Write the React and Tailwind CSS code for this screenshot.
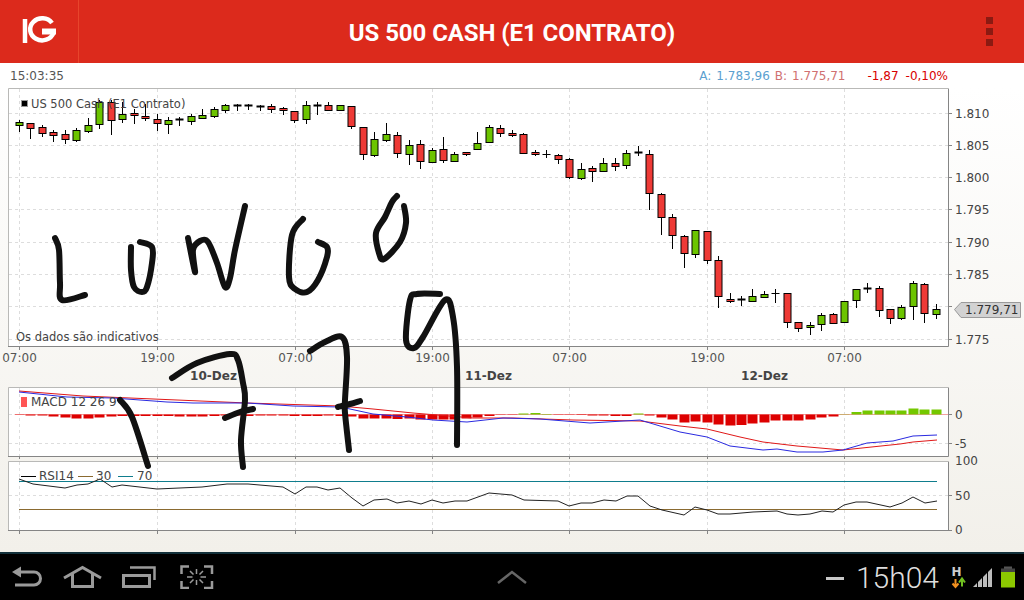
import React from "react";

/* [wickTop, bodyTop, bodyBottom, wickBottom, color] in page pixels */
const CANDLES = [
  [120,122,125,132,"g"],[123,123,128,139,"r"],[125,127,133,137,"r"],[130,132,135,142,"r"],[130,134,139,144,"r"],
  [128,130,140,142,"g"],[118,125,131,133,"g"],[100,102,124,129,"g"],[100,102,120,135,"r"],[102,114,119,123,"g"],
  [109,113,115,124,"r"],[104,116,118,121,"r"],[114,119,123,131,"r"],[117,120,124,134,"g"],[117,119,120,126,"k"],
  [114,116,121,125,"g"],[109,115,118,119,"g"],[107,109,116,118,"g"],[104,105,110,113,"g"],[104,105,106,111,"k"],
  [104,105,106,110,"k"],[105,106,107,111,"k"],[104,106,109,113,"r"],[107,108,110,115,"r"],[111,111,120,123,"r"],
  [101,105,119,124,"g"],[102,105,106,115,"k"],[102,105,110,111,"r"],[105,105,110,110,"g"],[106,106,126,129,"r"],
  [127,127,154,160,"r"],[132,139,155,157,"g"],[123,134,140,142,"g"],[132,135,153,158,"r"],[140,145,154,165,"g"],
  [140,144,161,169,"r"],[148,150,162,163,"g"],[137,149,160,163,"r"],[152,154,161,161,"g"],[152,152,154,156,"r"],
  [132,143,149,150,"g"],[125,127,142,143,"g"],[125,128,133,137,"r"],[130,133,135,137,"r"],[133,134,153,153,"r"],
  [150,152,154,156,"r"],[150,154,154,158,"k"],[154,155,159,164,"r"],[158,159,177,179,"r"],[163,169,178,180,"g"],
  [166,168,171,182,"r"],[158,163,171,172,"g"],[158,163,166,171,"r"],[150,153,165,169,"g"],[146,152,153,156,"k"],
  [150,154,193,210,"r"],[193,194,217,235,"r"],[214,217,235,249,"r"],[235,236,253,268,"r"],[230,230,254,258,"g"],
  [231,231,260,264,"r"],[256,260,296,308,"r"],[293,299,301,303,"r"],[296,299,300,306,"k"],[289,296,301,301,"g"],
  [291,294,297,297,"g"],[289,293,293,303,"k"],[293,293,322,328,"r"],[322,322,328,332,"r"],[322,325,327,335,"g"],
  [313,315,324,331,"g"],[313,314,323,323,"r"],[301,301,322,323,"g"],[289,289,300,308,"g"],[283,288,289,293,"k"],
  [286,288,310,317,"r"],[309,309,318,324,"r"],[305,307,318,320,"g"],[281,283,306,320,"g"],[283,284,313,323,"r"],
  [304,309,314,319,"g"],
];

/* MACD histogram: px from the zero line, positive goes up */
const HIST = [
  -0.3,-1,-1,-2,-3,-4,-4,-3,-2,-1.5,-1.5,-1.5,-1.5,-1.5,-2,-2,-2,-1.5,-1,-1,-1.5,-1,-1,-1,-1.5,-1.5,-1.5,-1,-1.5,-2,
  -4,-4,-4,-4.5,-4,-5,-5,-5,-5,-4,-3,-1.5,-0.3,-0.3,1,1.5,0.5,-0.3,-0.3,-0.5,-1,-1,-1.5,-1.5,1,-1,-3,-5,
  -8,-7,-8,-10,-11,-10.5,-9,-8,-6,-6,-6,-5,-3,-2,0.3,2.5,4,4,4,4,6,5,5,
];

const MACD_RED = [[19,391],[83,396],[177,400],[247,403],[340,406],[373,409],[413,413],[473,418],[513,418],[573,420],[640,421],[680,426],[707,429],[740,437],[763,442],[780,444],[797,446],[843,450],[900,444],[913,442],[937,440]];
const MACD_BLUE = [[19,392],[67,397],[113,398],[167,402],[193,403],[247,403],[293,406],[340,407],[350,409],[373,414],[407,417],[433,420],[467,422],[503,418],[540,419],[590,423],[640,420],[680,432],[707,437],[730,446],[763,450],[777,449],[797,452],[823,452],[843,450],[867,443],[893,441],[913,436],[937,435]];
const RSI = [[19,479],[33,484],[65,488],[77,485],[88,484],[100,479],[112,487],[122,485],[157,489],[202,487],[227,484],[248,484],[283,487],[295,494],[306,487],[317,487],[328,490],[340,488],[352,498],[363,506],[374,500],[387,499],[397,503],[409,501],[421,504],[432,500],[443,503],[455,501],[467,501],[489,493],[512,495],[524,500],[558,501],[569,506],[581,503],[592,503],[604,500],[616,501],[627,496],[638,496],[650,506],[662,510],[684,515],[695,507],[707,510],[718,514],[730,514],[753,512],[777,511],[787,514],[798,515],[810,514],[822,511],[833,512],[844,505],[856,502],[867,502],[890,507],[902,503],[913,497],[925,503],[937,501]];

/* the pen strokes written over the chart */
const STROKES = [
  [[55,238],[59,250],[60,283],[62,300],[85,295]],
  [[131,247],[131,270],[134,287],[142,292],[147,287],[152,263],[152,247],[140,242]],
  [[188,238],[195,272],[193,250],[200,241],[208,242],[217,263],[225,287],[230,278],[235,250],[245,206]],
  [[303,219],[292,235],[289,277],[295,289],[307,292],[318,280],[327,257],[327,247],[318,242]],
  [[397,196],[392,202],[385,217],[376,233],[379,253],[384,259],[400,242],[406,223],[404,206]],
  [[120,400],[132,417],[148,466]],
  [[172,378],[197,363],[230,354],[238,360],[243,383],[245,400],[241,440],[243,467]],
  [[225,418],[240,412],[253,409]],
  [[310,351],[325,342],[342,337],[347,357],[345,400],[345,413],[349,450]],
  [[338,407],[350,404],[360,401]],
  [[440,294],[417,294],[410,300],[406,340],[414,348],[423,337],[445,300],[453,317],[457,367],[457,445]],
];

const GRID_X = [19.5, 157.5, 295.5, 432.5, 569.5, 707.5, 844.5];
const TIMES = ["07:00", "19:00", "07:00", "19:00", "07:00", "19:00", "07:00"];
const PRICES = [["1.810",113],["1.805",145],["1.800",177],["1.795",209],["1.790",242],["1.785",274],["1.775",339]];

const pts = (list) => list.map((p) => p.join(",")).join(" ");

function smooth(list) {
  let d = `M${list[0][0]} ${list[0][1]}`;
  for (let i = 0; i < list.length - 1; i++) {
    const a = list[i - 1] || list[i], b = list[i], c = list[i + 1], e = list[i + 2] || c;
    d += ` C${b[0] + (c[0] - a[0]) / 6} ${b[1] + (c[1] - a[1]) / 6} ${c[0] - (e[0] - b[0]) / 6} ${c[1] - (e[1] - b[1]) / 6} ${c[0]} ${c[1]}`;
  }
  return d;
}

function candleX(i) {
  return Math.round(19 + i * 11.46) + 0.5;
}

function Grid({ top, bottom, ys }) {
  return (
    <g stroke="#dddddd" strokeDasharray="3 3">
      {GRID_X.map((x) => <line key={x} x1={x} x2={x} y1={top} y2={bottom} />)}
      {ys.map((y) => <line key={y} x1="9" x2="948" y1={y + 0.5} y2={y + 0.5} />)}
    </g>
  );
}

function Frame({ top, bottom, ys }) {
  return (
    <g fill="none">
      <path d={`M8.5 ${bottom}V${top}H948`} stroke="#b9b9b7" />
      <path d={`M8 ${bottom + 0.5}H948.5V${top}`} stroke="#858585" />
      {ys.map((y) => <line key={y} x1="948" x2="952" y1={y + 0.5} y2={y + 0.5} stroke="#858585" />)}
      {GRID_X.map((x) => <line key={x} x1={x} x2={x} y1={bottom} y2={bottom + 4} stroke="#858585" />)}
    </g>
  );
}

function MainChart() {
  const ys = [113, 145, 177, 209, 242, 274, 306, 339];
  return (
    <svg viewBox="0 88 1024 299" width="1024" height="299" className="block text-[12px] fill-[#444444]">
      <rect x="9" y="88" width="939" height="258" fill="#ffffff" />
      <Grid top={89} bottom={346} ys={ys} />
      {CANDLES.map(([wt, bt, bb, wb, c], i) => {
        const x = candleX(i);
        const fill = c === "r" ? "#ee3a36" : c === "g" ? "#6cc400" : "#000000";
        return (
          <g key={i} stroke="#000000">
            <line x1={x} x2={x} y1={wt} y2={wb} />
            {bb - bt < 1.5
              ? <line x1={x - 4} x2={x + 4} y1={bt + 0.5} y2={bt + 0.5} strokeWidth={c === "k" && i !== 46 && i !== 66 ? 2 : 1} />
              : <rect x={x - 3.5} y={bt + 0.5} width="7" height={bb - bt} fill={fill} />}
          </g>
        );
      })}
      <Frame top={88.5} bottom={346} ys={ys} />
      <rect x="21.5" y="100.5" width="6" height="6" fill="#000000" stroke="#999999" />
      <text x="31" y="108" className="text-[11.5px]">US 500 Cash (E1 Contrato)</text>
      <text x="16" y="341" className="text-[11.5px]">Os dados são indicativos</text>
      {PRICES.map(([t, y]) => <text key={t} x="955" y={y + 4.5}>{t}</text>)}
      {GRID_X.map((x, i) => <text key={x} x={x} y="362" textAnchor="middle" className="fill-[#555555]">{TIMES[i]}</text>)}
      <g className="font-bold fill-[#444444]">
        <text x="213.500" y="380" textAnchor="middle">10-Dez</text>
        <text x="488.500" y="380" textAnchor="middle">11-Dez</text>
        <text x="764.500" y="380" textAnchor="middle">12-Dez</text>
      </g>
      <path d="M954.500 309.500 L961 302.500 H1020.500 V317.500 H961 Z" fill="#d2d2d2" stroke="#9a9a9a" />
      <text x="965" y="314" className="fill-[#333333]">1.779,71</text>
    </svg>
  );
}

function MacdChart() {
  const zero = 414.5;
  return (
    <svg viewBox="0 387 1024 72" width="1024" height="72" className="block text-[12px] fill-[#444444]">
      <rect x="9" y="387" width="939" height="70" fill="#ffffff" />
      <Grid top={388} bottom={456} ys={[414, 443]} />
      <line x1="15" x2="948" y1={zero} y2={zero} stroke="#f4a0a0" />
      {HIST.map((v, i) => (
        <rect
          key={i}
          x={candleX(i) - 5}
          y={v > 0 ? zero - v : zero}
          width="10"
          height={Math.abs(v)}
          fill={v > 0 ? "#74c800" : "#dd0000"}
        />
      ))}
      <polyline points={pts(MACD_RED)} fill="none" stroke="#e01818" />
      <polyline points={pts(MACD_BLUE)} fill="none" stroke="#2a2ae0" />
      <Frame top={387.5} bottom={456} ys={[414, 443]} />
      <rect x="21" y="397" width="6" height="10" fill="#ff5555" />
      <text x="31" y="406">MACD 12 26 9</text>
      <text x="955" y="419">0</text>
      <text x="955" y="448">-5</text>
    </svg>
  );
}

function RsiChart() {
  return (
    <svg viewBox="0 459 1024 93" width="1024" height="93" className="block overflow-visible text-[12px] fill-[#444444]">
      <rect x="9" y="461" width="939" height="69" fill="#ffffff" />
      <Grid top={462} bottom={530} ys={[495]} />
      <line x1="19" x2="937" y1="481.5" y2="481.5" stroke="#0f7d8d" />
      <line x1="19" x2="937" y1="509.5" y2="509.5" stroke="#8a6a30" />
      <polyline points={pts(RSI)} fill="none" stroke="#222222" />
      <Frame top={461.5} bottom={530} ys={[495, 530]} />
      <line x1="21" x2="36" y1="476.5" y2="476.5" stroke="#000000" />
      <text x="39" y="480">RSI14</text>
      <line x1="78" x2="93" y1="476.5" y2="476.5" stroke="#8a6a30" />
      <text x="96" y="480">30</text>
      <line x1="118" x2="133" y1="476.5" y2="476.5" stroke="#0f7d8d" />
      <text x="137" y="480">70</text>
      <text x="955" y="465">100</text>
      <text x="955" y="500">50</text>
      <text x="955" y="534">0</text>
    </svg>
  );
}

function IgLogo() {
  return (
    <svg viewBox="0 0 79 63" width="79" height="63" fill="none" stroke="#ffffff" strokeWidth="4.500">
      <path d="M25 19V43" />
      <path d="M52 23A12 11 0 1 0 53.500 33" />
      <path d="M42 31.500H56" strokeWidth="6" />
    </svg>
  );
}

function BackIcon() {
  return (
    <svg viewBox="10 565 34 24" width="34" height="24" fill="none" stroke="#9a9a9a" strokeWidth="3">
      <path d="M21 572H34a6.5 6.5 0 0 1 0 13H15" />
      <path d="M12 572L21 566.500V577.500Z" fill="#9a9a9a" stroke="none" />
    </svg>
  );
}

function HomeIcon() {
  return (
    <svg viewBox="62 565 42 24" width="42" height="24" fill="none" stroke="#9a9a9a" strokeWidth="3">
      <path d="M64 578L82.500 567.500L101 578" />
      <path d="M72.500 574V586.500H92.500V574" />
    </svg>
  );
}

function RecentIcon() {
  return (
    <svg viewBox="122 565 38 24" width="38" height="24" fill="none" stroke="#9a9a9a" strokeWidth="3">
      <rect x="123.500" y="575.500" width="26" height="11" />
      <path d="M130 567.500H154.500V580" strokeWidth="2.500" />
    </svg>
  );
}

function ShotIcon() {
  return (
    <svg viewBox="178 565 36 24" width="36" height="24" fill="none" stroke="#9a9a9a" strokeWidth="2.500">
      <path d="M181.500 574V566.500H189M204 566.500H212V574M212 581V588H204M189 588H181.500V581" />
      <path d="M196.500 569V574M196.500 580V585M187 577H192.500M200.500 577H206M190 571L193.500 574.500M203 571L199.500 574.500M190 583L193.500 579.500M203 583L199.500 579.500" strokeWidth="1.500" />
    </svg>
  );
}

function StatusIcons() {
  return (
    <svg viewBox="950 565 66 24" width="66" height="24" fill="none">
      <text x="951.500" y="575.500" fill="#cccccc" className="text-[12px] font-bold">H</text>
      <path d="M955.500 579V586M952.500 583.500L955.500 587L958.500 583.500" stroke="#f09020" strokeWidth="2" />
      <path d="M962 586.500V580M959 582.500L962 578.500L965 582.500" stroke="#70c020" strokeWidth="2" />
      <path d="M973 587L977 583V587ZM978 582L982 578V587H978ZM983 577L987 573V587H983ZM988 572L992 568V587H988Z" fill="#bdbdbd" />
      <rect x="1004" y="566.500" width="8" height="2.500" fill="#555555" />
      <rect x="1001" y="568.500" width="14" height="4" fill="#444444" />
      <rect x="1001" y="572" width="14" height="15.500" fill="#8cc800" />
    </svg>
  );
}

function Handwriting() {
  return (
    <svg viewBox="0 0 1024 600" width="1024" height="600" className="absolute inset-0 pointer-events-none" fill="none" stroke="#111111" strokeWidth="6" strokeLinecap="round" strokeLinejoin="round">
      {STROKES.map((s, i) => <path key={i} d={smooth(s)} />)}
    </svg>
  );
}

export default function App() {
  return (
    <div className="relative flex h-[600px] w-[1024px] flex-col overflow-hidden bg-white font-['DejaVu_Sans',sans-serif]">
      <header className="flex h-[63px] items-center bg-[#dc2a1c]">
        <div className="h-full w-[79px] border-r border-[#e8452c]">
          <IgLogo />
        </div>
        <h1 className="flex-1 pt-[2px] text-center font-['Roboto',sans-serif] text-[24px] font-bold leading-none tracking-[-0.08px] text-white">
          US 500 CASH (E1 CONTRATO)
        </h1>
        <div className="flex w-[79px] flex-col items-end gap-[4px] pr-[31px]">
          <span className="h-[7px] w-[7px] bg-[#8b1a12]" />
          <span className="h-[7px] w-[7px] bg-[#8b1a12]" />
          <span className="h-[7px] w-[7px] bg-[#8b1a12]" />
        </div>
      </header>

      <div className="flex h-[25px] items-center justify-between pl-[10px] pr-[76px] text-[12px]">
        <span className="text-[#555555]">15:03:35</span>
        <div className="flex">
          <span className="text-[#5b9fd0]">A:</span>
          <span className="ml-[5px] text-[#5b9fd0]">1.783,96</span>
          <span className="ml-[5px] text-[#d07070]">B:</span>
          <span className="ml-[5px] text-[#d07070]">1.775,71</span>
          <span className="ml-[22px] text-[#d80000]">-1,87</span>
          <span className="ml-[7px] text-[#d80000]">-0,10%</span>
        </div>
      </div>

      <main className="flex-1 bg-linear-to-b from-white to-[#f2f0ea]">
        <MainChart />
        <MacdChart />
        <RsiChart />
      </main>

      <nav className="grid h-[48px] grid-cols-3 items-center border-t-2 border-[#12303a] bg-black">
        <div className="flex items-center gap-[18px] pl-[10px]">
          <BackIcon />
          <HomeIcon />
          <RecentIcon />
          <ShotIcon />
        </div>
        <div className="flex justify-center">
          <svg viewBox="0 0 30 14" width="30" height="14" fill="none" stroke="#666666" strokeWidth="2.500">
            <path d="M1 13L15 2L29 13" />
          </svg>
        </div>
        <div className="flex items-center justify-end pr-[8px]">
          <span className="mt-[2px] h-[3px] w-[18px] bg-[#c8c8c8]" />
          <span className="ml-[12px] mt-[2px] font-['Roboto',sans-serif] text-[30px] font-light leading-none text-[#dddddd]">15h04</span>
          <span className="ml-[11px]"><StatusIcons /></span>
        </div>
      </nav>

      <Handwriting />
    </div>
  );
}
